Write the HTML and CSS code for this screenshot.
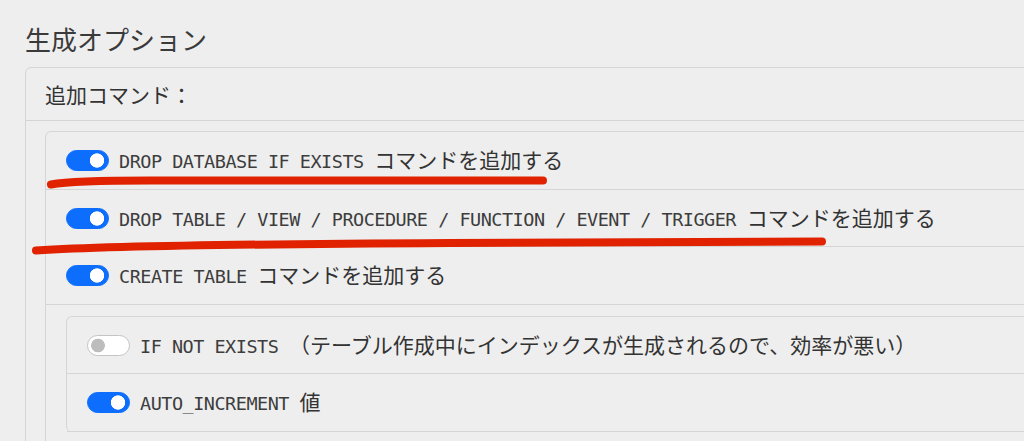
FILE: index.html
```html
<!DOCTYPE html>
<html lang="ja">
<head>
    <meta charset="UTF-8">
    <meta name="viewport" content="width=device-width, initial-scale=1.0">
    <title>生成オプション</title>
    <link rel="stylesheet" href="styles.css">
</head>
<body>
    <div class="page">
        <h5 class="section-title">生成オプション</h5>

        <div class="card">
            <div class="card-header">追加コマンド：</div>
            <div class="card-body">
                <ul class="list">
                    <li class="item">
                        <input type="checkbox" class="switch" id="dropDb" checked>
                        <label for="dropDb"><code>DROP DATABASE IF EXISTS </code>コマンドを追加する</label>
                    </li>
                    <li class="item">
                        <input type="checkbox" class="switch" id="dropTable" checked>
                        <label for="dropTable"><code>DROP TABLE / VIEW / PROCEDURE / FUNCTION / EVENT / TRIGGER </code>コマンドを追加する</label>
                    </li>
                    <li class="item">
                        <input type="checkbox" class="switch" id="createTable" checked>
                        <label for="createTable"><code>CREATE TABLE </code>コマンドを追加する</label>
                    </li>
                    <li class="item item-nested">
                        <ul class="list">
                            <li class="item">
                                <input type="checkbox" class="switch" id="ifNotExists">
                                <label for="ifNotExists"><code>IF NOT EXISTS </code>（テーブル作成中にインデックスが生成されるので、効率が悪い）</label>
                            </li>
                            <li class="item">
                                <input type="checkbox" class="switch" id="autoInc" checked>
                                <label for="autoInc"><code>AUTO_INCREMENT </code>値</label>
                            </li>
                        </ul>
                    </li>
                </ul>
            </div>
        </div>

        <!-- 手書きの下線（注釈） -->
        <svg class="marks" width="1024" height="441" viewBox="0 0 1024 441">
            <path d="M51 184.5 C 70 181, 100 180.5, 150 180.5 L 543 180.5" />
            <path d="M36 250.5 C 100 246.5, 250 244, 450 243 L 822 241.5" />
        </svg>
    </div>
</body>
</html>
```

FILE: styles.css
```css
:root {
    --bg-color: #eeeeee;
    --border-color: #d5d5d5;
    --text-color: #333;
    --code-color: #3d3d3d;
    --primary-color: #0d6efd;
    --mark-color: #e02200;
}

* {
    box-sizing: border-box;
    margin: 0;
    padding: 0;
}

html, body {
    overflow: hidden;
}

body {
    font-family: "Noto Sans CJK JP", "Noto Sans", sans-serif;
    font-size: 21px;
    background-color: var(--bg-color);
    color: var(--text-color);
}

.page {
    position: relative;
    width: 1100px;
    padding: 23px 0 0 25px;
    border-left: 5px solid #f1f1f1;
    margin-left: -5px;
    min-height: 441px;
}

.section-title {
    font-size: 26px;
    font-weight: 400;
    line-height: 31px;
    color: #3a3a3a;
    margin-bottom: 13px;
}

.card {
    border: 1px solid var(--border-color);
    border-radius: 6px;
    background: var(--bg-color);
}

.card-header {
    padding: 11px 19px;
    line-height: 30px;
    border-bottom: 1px solid var(--border-color);
}

.card-body {
    padding: 10px 19px;
}

.list {
    list-style: none;
    border: 1px solid var(--border-color);
    border-bottom: none;
    border-radius: 6px;
}

.item {
    display: flex;
    align-items: center;
    gap: 10px;
    height: 57.7px;
    padding: 0 20px;
    border-bottom: 1px solid var(--border-color);
}

.item-nested {
    display: block;
    height: auto;
    padding: 11px 20px 20px;
}

.item-nested .item {
    height: 57.3px;
}

label {
    line-height: 30px;
    white-space: nowrap;
}

code {
    font-family: "DejaVu Sans Mono", "Liberation Mono", monospace;
    font-size: 18.5px;
    letter-spacing: -0.5px;
    color: var(--code-color);
}

/* スイッチ */
.switch {
    appearance: none;
    -webkit-appearance: none;
    flex: none;
    width: 43px;
    height: 21px;
    border: 1px solid #c4c4c4;
    border-radius: 11px;
    background: radial-gradient(circle at 10px 50%, #bdbdbd 6.5px, transparent 7.2px), #fff;
    cursor: pointer;
}

.switch:checked {
    border-color: var(--primary-color);
    background: radial-gradient(circle at calc(100% - 11px) 50%, #fff 6.8px, transparent 7.5px), var(--primary-color);
}

.marks {
    position: absolute;
    left: 0;
    top: 0;
    pointer-events: none;
}

.marks path {
    fill: none;
    stroke: var(--mark-color);
    stroke-width: 8;
    stroke-linecap: round;
}
```
